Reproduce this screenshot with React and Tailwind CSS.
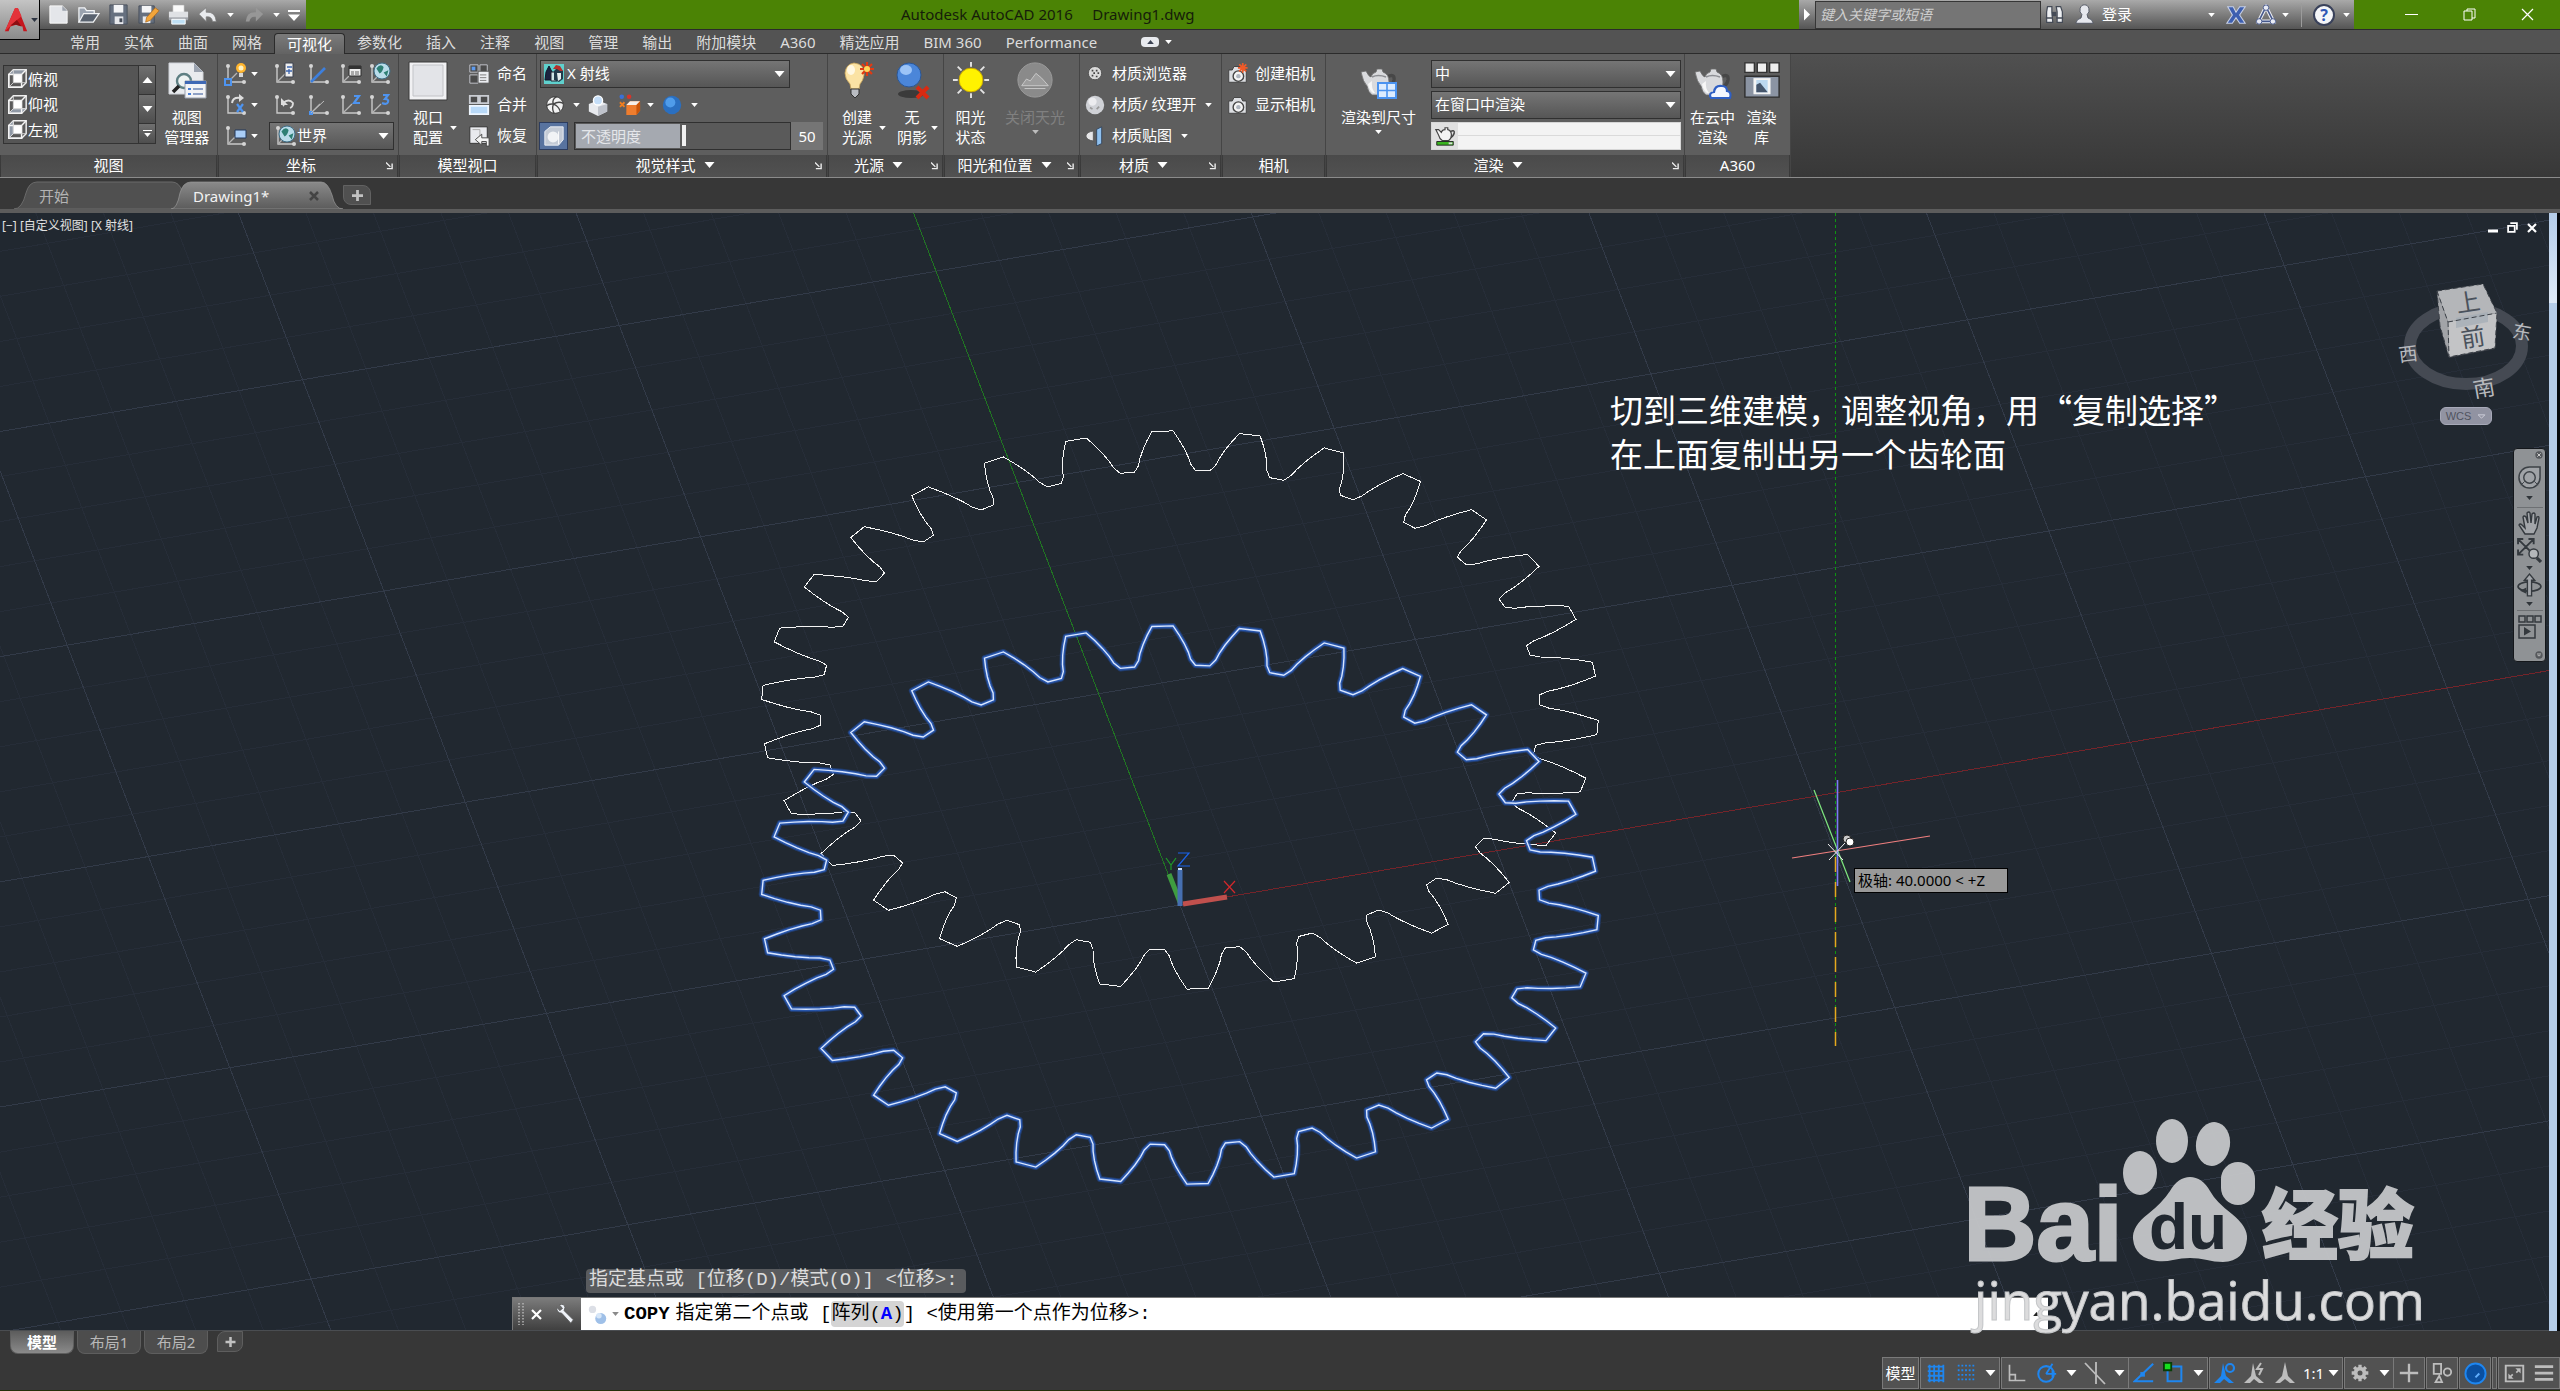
import React from "react";

/* ---------- small shared pieces ---------- */

function Tri({ up = false, size = "sm", color = "#fff" }) {
  return (
    <svg viewBox="0 0 10 6" className={(size === "lg" ? "w-[11px] h-[6px]" : "w-[7px] h-[4px]") + " shrink-0"}>
      <path d={up ? "M0 6h10L5 0z" : "M0 0h10L5 6z"} fill={color} />
    </svg>
  );
}

function Ic({ w = 24, vb, children }) {
  return (
    <svg width={w} height={w} viewBox={vb || "0 0 24 24"} fill="none" className="shrink-0">
      {children}
    </svg>
  );
}

function Ucs({ children, diag = true, w = 24 }) {
  return (
    <Ic w={w}>
      <path d="M5 4v16h16" stroke="#c9c9c9" strokeWidth="1.4" />
      {diag && <path d="M5 20L14 11" stroke="#b5b5b5" strokeWidth="1.2" />}
      <circle cx="5" cy="4" r="2" fill="#d5d5d5" />
      <circle cx="21" cy="20" r="2" fill="#d5d5d5" />
      {children}
    </Ic>
  );
}

function Globe({ cx, cy, r }) {
  return (
    <g>
      <circle cx={cx} cy={cy} r={r} fill="#b9dcea" stroke="#3e6d86" />
      <path
        d={`M${cx - r * 0.7} ${cy - r * 0.3}q${r * 0.5} ${-r * 0.7} ${r * 0.9} ${-r * 0.2}q${-r * 0.1} ${r * 0.6} ${-r * 0.5} ${r * 0.8}zM${cx + r * 0.2} ${cy + r * 0.2}l${r * 0.6} ${-r * 0.3}l${-r * 0.2} ${r * 0.8}z`}
        fill="#2d7f74"
      />
    </g>
  );
}

function CubeIcon({ face }) {
  const faces = { top: "M3 7l5-5h14l-5 5z", bottom: "M3 21l5-5h14l-5 5z", left: "M3 7l5-5v14l-5 5z" };
  return (
    <Ic w={22}>
      <path d="M3 7l5-5h14v14l-5 5H3z" fill="#5a5a5a" stroke="#f0f0f0" strokeWidth="1.6" />
      <path d="M8 7h9v9H8z" fill="#fff" />
      <path d={faces[face]} fill="#8f98a5" stroke="#f0f0f0" strokeWidth="1" />
      <path d="M3 7h14v14H3zM17 7l5-5" stroke="#f4f4f4" strokeWidth="1.6" />
      <path d="M8 2v14h14M8 16l-5 5" stroke="#d4d4d4" strokeWidth="1" />
    </Ic>
  );
}

function Teapot({ x = 0, y = 0, s = 1 }) {
  return (
    <g transform={`translate(${x} ${y}) scale(${s})`}>
      <path d="M28 12q8-4 7 3q-1 6-9 9" stroke="#474747" strokeWidth="3.4" />
      <path d="M2 7l5-1q3 6 5 6q1-4 5-5l1-3h5l1 3q6 2 6 10q0 9-5 13H13q-4-3-5-9Q4 17 2 7z" fill="#d9dadd" stroke="#6b6b6b" strokeWidth="0.8" />
      <path d="M13 12q6-3 14 0" stroke="#8d8f94" strokeWidth="1.4" />
      <path d="M13 16q-1 7 3 12h-2q-4-3-5-9z" fill="#f7f7f7" />
    </g>
  );
}

/* ---------- title bar ---------- */

function QuickAccess() {
  return (
    <div className="w-[306px] h-[29px] shrink-0 pl-[47px] flex items-center gap-[7px] bg-linear-to-b from-[#a9a9a9] to-[#555555]">
      <button aria-label="新建">
        <Ic w={23}><path d="M3 3h13l5 5v13H3z" fill="#e4e6ea" stroke="#fafafa" /><path d="M16 3v5h5z" fill="#9da3ad" /></Ic>
      </button>
      <button aria-label="打开">
        <Ic w={23}><path d="M2 20V5h6l2 3h8v4" fill="#9aa3b0" stroke="#f2f4f6" strokeWidth="1.3" /><path d="M2 20l5-9h16l-6 9z" fill="#59626f" stroke="#f2f4f6" strokeWidth="1.3" /></Ic>
      </button>
      <button aria-label="保存">
        <Ic w={23}><path d="M3 2h18v20H3z" fill="#66707f" stroke="#4a525e" /><path d="M7 2h10v8H7z" fill="#f3f4f6" /><path d="M8 14h9v8H8z" fill="#e6e8ec" /><path d="M13 16h3v4h-3z" fill="#444b57" /></Ic>
      </button>
      <button aria-label="另存为">
        <Ic w={23}><path d="M2 3h16v18H2z" fill="#66707f" stroke="#4a525e" /><path d="M5 3h10v7H5z" fill="#f3f4f6" /><path d="M6 14h8v7H6z" fill="#e6e8ec" /><path d="M10 15l9-10 4 3-9 10-5 2z" fill="#f2a53a" stroke="#a8651a" strokeWidth="0.7" /></Ic>
      </button>
      <button aria-label="打印">
        <Ic w={23}><path d="M6 2h12v8H6z" fill="#fafafa" stroke="#999" strokeWidth="0.6" /><path d="M2 9h20v8H2z" fill="#dfe1e4" /><path d="M2 15h20v3H2z" fill="#9fa3a9" /><path d="M5 17h14v5H5z" fill="#bfe0f5" stroke="#fff" /></Ic>
      </button>
      <button aria-label="放弃" className="flex items-center gap-[8px]">
        <Ic w={22}><path d="M10 4v5q10-1 11 10h-4q-1-6-7-5v5L2 11z" fill="#e9ebee" stroke="#777" strokeWidth="0.7" /></Ic>
        <Tri />
      </button>
      <button aria-label="重做" className="flex items-center gap-[8px] pl-[2px]">
        <Ic w={22}><path d="M14 4v5Q4 8 3 19h4q1-6 7-5v5l8-8z" fill="#979797" /></Ic>
        <Tri />
      </button>
      <button aria-label="自定义快速访问工具栏">
        <Ic w={14} vb="0 0 14 14"><path d="M1 2h12v2H1zM1 6.500h12L7 13z" fill="#fff" /></Ic>
      </button>
    </div>
  );
}

function InfoCenter() {
  return (
    <div className="w-[555px] h-[29px] shrink-0 flex items-center bg-linear-to-b from-[#a9a9a9] to-[#555555]">
      <button aria-label="展开" className="w-4 flex justify-center">
        <svg viewBox="0 0 6 12" className="w-[6px] h-[13px]"><path d="M0 0l6 6-6 6z" fill="#fff" /></svg>
      </button>
      <input
        aria-label="搜索"
        placeholder="键入关键字或短语"
        className="w-[226px] h-[28px] px-1 text-[14px] italic bg-[#757575] border border-[#363636] placeholder-[#cfcfcf] text-white outline-none"
      />
      <div className="flex items-center flex-1 pl-[3px]">
        <button aria-label="搜索按钮">
          <Ic w={21}><path d="M4 3h5v6l1 12H3L3 9zM14 3h5l2 6v12h-6V9z" fill="#eef0f3" stroke="#454b57" strokeWidth="1.4" /><path d="M9 9h5v5H9z" fill="#454b57" /><path d="M2 16h8M14 16h8" stroke="#454b57" strokeWidth="1.500" /></Ic>
        </button>
        <button className="flex items-center gap-[7px] pl-[9px] text-white text-[15px]">
          <Ic w={21}><path d="M12 1a5 6 0 0 1 3 11l1 4q5 1 6 6H2q1-5 6-6l1-4A5 6 0 0 1 12 1z" fill="#e6e8ee" stroke="#4a505d" /></Ic>
          <span>登录</span>
        </button>
        <button aria-label="登录选项" className="ml-[76px]"><Tri /></button>
        <button aria-label="Exchange" className="ml-[10px]">
          <Ic w={22}><path d="M3 3h6l3 6 4-6h6l-6 9 6 9h-6l-4-6-4 6H2l6-9z" fill="#3d5fb0" stroke="#c7d0e6" strokeWidth="1.2" /></Ic>
        </button>
        <button aria-label="Autodesk 360" className="ml-[8px] flex items-center gap-[5px]">
          <Ic w={22}><path d="M12 3l8 16H4z" stroke="#eef0f6" strokeWidth="4" /><path d="M12 3l8 16H4z" stroke="#46588c" strokeWidth="1.8" /><circle cx="12" cy="4" r="3" fill="#e9ecf5" stroke="#46588c" /><circle cx="4.500" cy="19" r="3" fill="#e9ecf5" stroke="#46588c" /><circle cx="19.500" cy="19" r="3" fill="#e9ecf5" stroke="#46588c" /></Ic>
          <Tri />
        </button>
        <span className="w-px h-6 bg-[#9b9b9b] ml-[12px]" />
        <button aria-label="帮助" className="ml-[11px] flex items-center gap-[8px]">
          <span className="w-[22px] h-[22px] rounded-full bg-[#f4f5f8] border-2 border-[#39415a] text-[#2e57b5] font-bold text-[16px] leading-[18px] text-center">?</span>
          <Tri />
        </button>
      </div>
    </div>
  );
}

function TitleBar() {
  return (
    <header className="relative flex h-[30px] bg-[#4b8305] border-b border-[#2b2b2b] text-[15px]">
      <QuickAccess />
      <h1 className="flex-1 pl-[595px] leading-[29px] text-[#161d0a] whitespace-pre font-normal">{"Autodesk AutoCAD 2016     Drawing1.dwg"}</h1>
      <InfoCenter />
      <div className="w-[206px] shrink-0 flex items-center justify-between pl-[51px] pr-[26px]">
        <button aria-label="最小化"><Ic w={13} vb="0 0 13 13"><path d="M0 6.500h13" stroke="#fff" /></Ic></button>
        <button aria-label="还原"><Ic w={13} vb="0 0 13 13"><path d="M1 3h8v9H1zM4 3V1h8v9H9" stroke="#fff" /></Ic></button>
        <button aria-label="关闭"><Ic w={13} vb="0 0 13 13"><path d="M1 1l11 11M12 1L1 12" stroke="#fff" strokeWidth="1.2" /></Ic></button>
      </div>
      <button aria-label="应用程序菜单" className="absolute left-0 top-0 z-10 w-10 h-10 flex items-center gap-[2px] pl-[3px] border-r border-b border-black bg-linear-to-b from-[#c4c4c4] to-[#8a8a8a]">
        <Ic w={26} vb="0 0 26 28">
          <path d="M12 1L1 26h4l2-5 6-2 7 2 1 5h4L15 1z" fill="#c5161d" />
          <path d="M12 1L1 26l13-12 5-4L15 1z" fill="#e3333a" />
          <path d="M7 20l7-6 5 7-6-2z" fill="#8b0d12" />
        </Ic>
        <Tri color="#2d3442" />
      </button>
    </header>
  );
}

/* ---------- ribbon ---------- */

const tabs = ["常用", "实体", "曲面", "网格", "可视化", "参数化", "插入", "注释", "视图", "管理", "输出", "附加模块", "A360", "精选应用", "BIM 360", "Performance"];

function RibbonTabs() {
  return (
    <nav className="flex items-end h-6 pl-[58px] bg-[#535353] border-b border-[#2b2b2b] text-[15px] text-[#dcdcdc]">
      {tabs.map((t) => (
        <button
          key={t}
          className={
            t === "可视化"
              ? "h-[21px] px-3 leading-[17px] text-white bg-linear-to-b from-[#7b7b7b] to-[#636363] border border-b-0 border-[#2b2b2b] rounded-t-sm -mb-px"
              : "h-[21px] px-3 leading-[17px]"
          }
        >
          {t}
        </button>
      ))}
      <button aria-label="最小化功能区" className="flex items-center gap-[6px] h-[22px] ml-8">
        <span className="flex items-center justify-center w-[18px] h-[10px] rounded-sm bg-[#e8eaee]"><Tri up color="#3b4252" /></span>
        <Tri />
      </button>
    </nav>
  );
}

function Panel({ title, width, more, launcher, children }) {
  return (
    <section className={"shrink-0 flex flex-col border-r border-[#454545] " + width}>
      <div className="flex-1 flex bg-[#5e5e5e]">{children}</div>
      <div className={"relative h-[22px] mx-px flex items-center justify-center gap-[8px] text-white text-[15px] leading-[18px] pb-[2px] bg-linear-to-b from-[#4a4a4a] to-[#515151] " + (launcher ? "pr-[14px]" : "")}>
        <span>{title}</span>
        {more && <Tri size="lg" />}
        {launcher && (
          <button aria-label={title + "设置"} className="absolute right-[4px] top-[7px]">
            <svg viewBox="0 0 8 8" className="w-[7px] h-[8px]"><path d="M0 0l5 5M7 1v6H1" stroke="#eee" strokeWidth="1.600" fill="none" /></svg>
          </button>
        )}
      </div>
    </section>
  );
}

function Big({ icon, lines, arrow, below, dim, width }) {
  return (
    <button className={"relative flex flex-col items-center pt-[7px] text-[15px] leading-[20px] whitespace-nowrap " + (dim ? "text-[#808080] " : "text-white ") + width}>
      <span className="h-[46px] flex items-start justify-center">{icon}</span>
      {lines.map((l) => <span key={l}>{l}</span>)}
      {arrow && <span className="absolute right-0 top-[72px] flex"><Tri /></span>}
      {below && <span className="pt-[3px]"><Tri color={dim ? "#bdbdbd" : "#fff"} /></span>}
    </button>
  );
}

function Small({ icon, children, arrow }) {
  return (
    <button className="flex items-center gap-[7px] h-[31px] text-white text-[15px] whitespace-nowrap">
      {icon}
      <span>{children}</span>
      {arrow && <span className="pl-[2px]"><Tri /></span>}
    </button>
  );
}

function Combo({ label, options, icon, width, pad = "pl-[3px]" }) {
  return (
    <div className={"relative flex items-center h-[28px] border border-[#303030] bg-linear-to-b from-[#757575] to-[#565656] " + width}>
      {icon && <span className="absolute left-[3px] flex">{icon}</span>}
      <select aria-label={label} className={"appearance-none w-full h-full bg-transparent text-white text-[15px] outline-none " + pad}>
        {options.map((o) => <option key={o}>{o}</option>)}
      </select>
      <span className="absolute right-[4px] flex pointer-events-none"><Tri size="lg" /></span>
    </div>
  );
}

function ViewPanel() {
  return (
    <Panel title="视图" width="w-[218px]">
      <div className="flex mt-[11px] ml-[3px] w-[154px] h-[79px] border border-[#333] bg-[#555555]">
        <ul className="flex-1 flex flex-col text-white text-[15px]">
          {[["俯视", "top"], ["仰视", "bottom"], ["左视", "left"]].map(([t, f]) => (
            <li key={t} className="flex-1 flex items-center">
              <button className="flex items-center pl-[2px]"><CubeIcon face={f} />{t}</button>
            </li>
          ))}
        </ul>
        <div className="w-[17px] flex flex-col border-l border-[#333]">
          <button aria-label="上" className="h-[29px] flex items-center justify-center bg-linear-to-b from-[#707070] to-[#4e4e4e] border-b border-[#333]"><Tri up size="lg" /></button>
          <button aria-label="下" className="h-[29px] flex items-center justify-center bg-linear-to-b from-[#707070] to-[#4e4e4e] border-b border-[#333]"><Tri size="lg" /></button>
          <button aria-label="展开列表" className="flex-1 flex flex-col gap-[2px] items-center justify-center bg-linear-to-b from-[#707070] to-[#4e4e4e]"><span className="w-[9px] h-px bg-white" /><Tri /></button>
        </div>
      </div>
      <Big
        width="w-[61px]"
        lines={["视图", "管理器"]}
        icon={
          <Ic w={40} vb="0 0 40 40">
            <path d="M2 2h25l9 9v22H2z" fill="#e9ebee" stroke="#cfd2d8" /><path d="M27 2v9h9z" fill="#9ba3b0" />
            <circle cx="17" cy="20" r="7" stroke="#5e7f83" strokeWidth="2.4" fill="#eef3f3" /><path d="M12 25l-6 6" stroke="#222" strokeWidth="3.500" />
            <path d="M18 20h21v17H18z" fill="#f2f3f6" stroke="#9aa1ae" /><path d="M18 20h21v3H18z" fill="#3e68b5" />
            <path d="M21 27h3v2h-3zM21 32h3v2h-3z" fill="#4a7fd4" /><path d="M26 28h10M26 33h10" stroke="#6f87b5" strokeWidth="1.500" />
          </Ic>
        }
      />
    </Panel>
  );
}

function CoordPanel() {
  const row = "flex items-center h-[31px] pl-[5px]";
  return (
    <Panel title="坐标" width="w-[181px]" launcher>
      <div className="flex flex-col pt-[4px] w-full">
        <div className={row}>
          <button aria-label="UCS 图标" className="flex items-center gap-[4px] w-[49px]"><Ucs><path d="M2 17h6v6H2z" fill="#5e5e5e" stroke="#4e94f0" strokeWidth="2" /><circle cx="18" cy="6" r="5" fill="#ffb52e" /><circle cx="18" cy="6" r="2.500" fill="#fff3c4" /><path d="M16 11h4v4h-4z" fill="#d8d8d8" /></Ucs><Tri /></button>
          <button aria-label="命名 UCS" className="w-[34px]"><Ucs><path d="M13 1h8v14h-8z" fill="#eee" stroke="#3d4350" /><path d="M15 5h5M14 9h6M17 7v5" stroke="#3c65b0" strokeWidth="1.300" /></Ucs></button>
          <button aria-label="UCS" className="w-[32px]"><Ucs diag={false}><path d="M5 20L19 6" stroke="#3d7fdd" strokeWidth="2.600" /></Ucs></button>
          <button aria-label="UCS 列表" className="w-[29px]"><Ucs><path d="M11 4h12v10H11z" fill="#eee" stroke="#2d2d2d" /><path d="M11 4h12v3H11z" fill="#333" /><path d="M13 10h3M17 10h4M13 12h3M17 12h4" stroke="#666" /></Ucs></button>
          <button aria-label="世界 UCS"><Ucs><Globe cx={15} cy={9} r={8} /></Ucs></button>
        </div>
        <div className={row}>
          <button aria-label="绕 X 旋转" className="flex items-center gap-[4px] w-[49px]"><Ucs diag={false}><path d="M9 10q1-6 8-5" stroke="#ddd" strokeWidth="2" /><path d="M16 1l5 4-5 4z" fill="#ddd" /><path d="M14 11l6 8M20 11l-6 8" stroke="#4e94f0" strokeWidth="2.200" /></Ucs><Tri /></button>
          <button aria-label="上一个 UCS" className="w-[34px]"><Ucs diag={false}><path d="M12 13q-1-1-1-3 6-5 10 0 0 4-3 5" stroke="#ddd" strokeWidth="1.800" /><path d="M9 5v7h7z" fill="#ddd" /></Ucs></button>
          <button aria-label="原点" className="w-[32px]"><Ucs><path d="M3 18h4v4H3z" fill="#4e94f0" /><path d="M5 20L18 8" stroke="#bbb" /></Ucs></button>
          <button aria-label="Z 轴矢量" className="w-[29px]"><Ucs><path d="M16 3h5l-5 7h6" stroke="#4e94f0" strokeWidth="2.200" /></Ucs></button>
          <button aria-label="三点"><Ucs><path d="M16 2h5l-3 4q4 0 3 3-1 3-6 1" stroke="#4e94f0" strokeWidth="2.200" /></Ucs></button>
        </div>
        <div className={row}>
          <button aria-label="视图 UCS" className="flex items-center gap-[4px] w-[46px]"><Ucs><path d="M12 6h11v8H12z" fill="#a9cdf7" stroke="#23395d" /></Ucs><Tri /></button>
          <Combo label="坐标系" options={["世界"]} width="w-[125px]" pad="pl-[27px]" icon={<Ucs><Globe cx={14} cy={10} r={8} /></Ucs>} />
        </div>
      </div>
    </Panel>
  );
}

function ViewportPanel() {
  return (
    <Panel title="模型视口" width="w-[138px]">
      <Big
        width="w-[58px]"
        arrow
        lines={["视口", "配置"]}
        icon={<svg viewBox="0 0 40 40" className="w-[40px] h-[40px]"><path d="M1 1h38v38H1z" fill="#f1f1f3" stroke="#3a3a3a" /><path d="M5 4h30v31H5z" fill="#e3e4e8" stroke="#c2c3c7" /></svg>}
      />
      <div className="flex flex-col pt-[4px] pl-[11px]">
        <Small icon={<Ic w={22}><path d="M2 2h9v8H2zM13 2h8v8h-8zM2 13h9v9H2z" fill="#4b4b4b" stroke="#c9ccd2" /><path d="M4 4h4v4H4z" fill="#5d9bf0" /><path d="M11 9h12v13H11z" fill="#eceef2" stroke="#555" /><path d="M13 13h7M13 16h7M13 19h7" stroke="#777" /></Ic>}>命名</Small>
        <Small icon={<Ic w={22}><path d="M2 2h9v8H2zM13 2h9v8h-9z" fill="#4b4b4b" stroke="#c9ccd2" strokeWidth="2" /><path d="M2 13h20v9H2z" fill="#b8d9f8" stroke="#eef6ff" strokeWidth="2" /></Ic>}>合并</Small>
        <Small icon={<Ic w={22}><path d="M2 2h19v18H2z" fill="#e9eaee" stroke="#2f2f2f" /><path d="M5 5h8v9" stroke="#aaa" /><path d="M8 16l7-6v4h8v9h-3v-5h-5v4z" fill="#f4f4f4" stroke="#444" /></Ic>}>恢复</Small>
      </div>
    </Panel>
  );
}

function StylePanel() {
  return (
    <Panel title="视觉样式" width="w-[291px]" more launcher>
      <div className="flex flex-col pt-[4px] w-full">
        <div className="flex items-center h-[31px] pl-[3px]">
          <Combo
            label="视觉样式"
            options={["X 射线"]}
            width="w-[250px]"
            pad="pl-[26px]"
            icon={<Ic w={20} vb="0 0 20 20"><path d="M0 0h20v20H0z" fill="#5fd0cd" /><path d="M5 2l3 6-1 8H1l1-8z" fill="#1b2440" stroke="#101828" /><path d="M7 8h6v9H7z" fill="#cfe6e6" stroke="#223" /><path d="M10 16V7l4-4 5 4v8l-4 3z" fill="#223a4a" /><path d="M13 9h4v6l-3 2z" fill="#e4eded" /><path d="M9 5l3-4 4 1 3 5-3 0-3-2z" fill="#b5302b" /></Ic>}
          />
        </div>
        <div className="flex items-center h-[31px] pl-[8px]">
          <button aria-label="面样式" className="flex items-center gap-[8px] w-[42px]"><Ic w={20}><circle cx="12" cy="12" r="10" fill="#f1f1f1" stroke="#333" /><path d="M14 2q-6 3-4 9M10 11q6-4 12-1M10 11q-5-1-8 2M10 11q-2 6 1 11M10 11q6 2 8 8" stroke="#444" strokeWidth="1.600" /></Ic><Tri /></button>
          <button aria-label="X 射线效果" className="w-[32px]"><Ic w={22}><path d="M2 11l10-4 10 4v8l-10 5-10-5z" fill="#e8eaee" /><path d="M12 14v10l10-5v-8z" fill="#bfc3cb" /><circle cx="12" cy="7" r="5" fill="#c5def8" stroke="#fff" strokeWidth="1.500" /></Ic></button>
          <button aria-label="材质和纹理" className="flex items-center gap-[6px] w-[43px]"><Ic w={22}><circle cx="3" cy="3" r="2.500" fill="#3a70d6" /><circle cx="11" cy="3" r="2.500" fill="#d7342a" /><path d="M1 9l5 5M6 9l-5 5" stroke="#f07e1e" strokeWidth="2" /><path d="M8 12l4-4h11v10l-4 5H8z" fill="#ee7d2e" /><path d="M8 12l4-4h11l-4 4z" fill="#f5f0ea" /><path d="M19 12l4-4v10l-4 5z" fill="#c9550a" /></Ic><Tri /></button>
          <button aria-label="光线" className="flex items-center gap-[9px]"><Ic w={20}><circle cx="12" cy="12" r="11" fill="#2a6fc0" /><circle cx="10" cy="9" r="6" fill="#4f9cea" /></Ic><Tri /></button>
        </div>
        <div className="flex items-center h-[31px] pl-[2px]">
          <button aria-label="X 射线开关" className="w-[29px] h-[28px] flex items-center justify-center border border-[#2c3c5e] bg-[#58739f]"><Ic w={22}><path d="M2 7l6-5h14v14l-5 6H2z" fill="#c4cbd6" stroke="#f0f3f8" /><circle cx="11" cy="13" r="6" fill="#f1f3f6" /><path d="M17 7v14" stroke="#fff" /></Ic></button>
          <label className="relative ml-[6px] w-[217px] h-[28px] border border-[#303030] bg-[#5a5a5a] p-px flex text-[15px] leading-[24px] text-[#e4e6ea]">
            <span className="w-[104px] h-full bg-[#a5a9b0] pl-[5px]">不透明度</span>
            <span className="ml-[2px] w-[4px] h-[21px] mt-px bg-[#f0f0f0]" />
            <input type="range" defaultValue="50" className="absolute inset-0 w-full h-full opacity-0" />
          </label>
          <output className="w-[32px] h-[28px] bg-[#757575] text-white text-[15px] leading-[28px] text-center">50</output>
        </div>
      </div>
    </Panel>
  );
}

function LightPanel() {
  return (
    <Panel title="光源" width="w-[116px]" more launcher>
      <Big
        width="w-[58px]"
        arrow
        lines={["创建", "光源"]}
        icon={
          <Ic w={40} vb="0 0 40 40">
            <path d="M17 2q11 1 10 12-1 6-4 9l-1 5h-8l-1-5q-5-5-5-11Q9 3 17 2z" fill="#fbe3a4" stroke="#caa65a" strokeWidth="0.800" />
            <ellipse cx="14" cy="9" rx="4" ry="5" fill="#fff8e2" />
            <path d="M14 28h8v5l-4 4-4-4z" fill="#b9bcc2" stroke="#333" />
            <path d="M30 1v14M23 8h14M25 3l10 10M35 3L25 13" stroke="#e23a12" strokeWidth="2.200" /><circle cx="30" cy="8" r="3" fill="#ffd85c" />
          </Ic>
        }
      />
      <Big
        width="w-[52px]"
        arrow
        lines={["无", "阴影"]}
        icon={
          <Ic w={40} vb="0 0 40 40">
            <ellipse cx="19" cy="33" rx="13" ry="4" fill="#3a3a3a" />
            <ellipse cx="17" cy="14" rx="12" ry="12" fill="#4b86d9" stroke="#2c5795" /><ellipse cx="14" cy="9" rx="6" ry="5" fill="#9cc4f7" />
            <path d="M25 26l11 11M36 26L25 37" stroke="#d92a12" strokeWidth="4" />
          </Ic>
        }
      />
    </Panel>
  );
}

function SunPanel() {
  return (
    <Panel title="阳光和位置" width="w-[136px]" more launcher>
      <Big
        width="w-[53px]"
        lines={["阳光", "状态"]}
        icon={
          <Ic w={38} vb="0 0 40 40">
            <path d="M20 1v38M1 20h38M6 6l28 28M34 6L6 34" stroke="#e4e4e4" strokeWidth="2" />
            <circle cx="20" cy="20" r="14" fill="#5e5e5e" /><circle cx="20" cy="20" r="12.500" fill="#fff200" stroke="#caa800" />
          </Ic>
        }
      />
      <Big
        width="w-[76px]"
        dim
        below
        lines={["关闭天光"]}
        icon={
          <Ic w={38} vb="0 0 40 40">
            <circle cx="20" cy="20" r="18" fill="#8a8a8a" stroke="#9c9c9c" />
            <path d="M6 26l5-7 4 2 6-8 6 5 7 8z" fill="#9e9e9e" stroke="#c9c9c9" /><path d="M9 29h22" stroke="#c9c9c9" />
          </Ic>
        }
      />
    </Panel>
  );
}

function MaterialPanel() {
  return (
    <Panel title="材质" width="w-[142px]" more launcher>
      <div className="flex flex-col pt-[4px] pl-[5px]">
        <Small icon={<Ic w={20}><circle cx="12" cy="11" r="8" fill="#dadada" stroke="#444" /><path d="M8 7h2v2H8zM13 7h2v2h-2zM10 10h2v2h-2zM15 10h2v2h-2zM8 13h2v2H8zM13 14h2v2h-2z" fill="#444" /></Ic>}>材质浏览器</Small>
        <Small arrow icon={<Ic w={20}><circle cx="12" cy="12" r="11" fill="#cfd1d6" /><circle cx="9" cy="8" r="5" fill="#ececef" /><path d="M14 17l3-3M6 15l3 2" stroke="#999" strokeWidth="2" /></Ic>}>材质/ 纹理开</Small>
        <Small arrow icon={<Ic w={20}><path d="M10 6v12q-8-1-9-6 1-5 9-6z" fill="#e6e6e8" stroke="#555" /><path d="M14 4l6-3v20l-6 3z" fill="#8fc0ee" stroke="#2c3f57" /></Ic>}>材质贴图</Small>
      </div>
    </Panel>
  );
}

function Camera({ star }) {
  return (
    <Ic w={21}>
      <path d="M2 8h4l2-4h8l2 4h4v14H2z" fill="#dddfe3" stroke="#3b3b3b" />
      <circle cx="13" cy="15" r="6" fill="#f5f5f5" stroke="#444" strokeWidth="1.600" /><circle cx="13" cy="15" r="2.500" fill="#aeb4be" />
      {star && <path d="M18 0v11M12.500 5.500h11M14 1.500l8 8M22 1.500l-8 8" stroke="#f05a28" strokeWidth="2" />}
    </Ic>
  );
}

function CameraPanel() {
  return (
    <Panel title="相机" width="w-[104px]">
      <div className="flex flex-col pt-[4px] pl-[5px]">
        <Small icon={<Camera star />}>创建相机</Small>
        <Small icon={<Camera />}>显示相机</Small>
      </div>
    </Panel>
  );
}

function RenderPanel() {
  return (
    <Panel title="渲染" width="w-[359px]" more launcher>
      <Big
        width="w-[105px]"
        below
        lines={["渲染到尺寸"]}
        icon={
          <Ic w={40} vb="0 0 40 40">
            <Teapot y={4} />
            <path d="M19 22h18v15H19z" fill="#dcecff" stroke="#4b93f0" strokeWidth="2" /><path d="M28 22v15M19 29.500h18" stroke="#4b93f0" strokeWidth="1.600" />
          </Ic>
        }
      />
      <div className="flex flex-col pt-[4px]">
        <div className="h-[31px] flex items-center"><Combo label="渲染预设" options={["中"]} width="w-[250px]" /></div>
        <div className="h-[31px] flex items-center"><Combo label="渲染目标" options={["在窗口中渲染"]} width="w-[250px]" /></div>
        <div className="h-[31px] flex items-center">
          <div className="w-[250px] h-[28px] flex bg-[#f3f3f3] border border-[#d6d6d6]">
            <span className="w-[26px] bg-[#e0e0e0] flex items-center justify-center">
              <Ic w={22}>
                <path d="M18 7q5-2 4 2-1 4-5 5" stroke="#444" strokeWidth="1.600" />
                <path d="M2 5h3l3 3q1-3 4-3V3h3v2q4 1 4 6 0 4-3 6H9q-3-2-4-6z" fill="#f4f4f4" stroke="#444" strokeWidth="1.300" />
                <path d="M3 18h18v4H3z" fill="#39b31e" stroke="#222" /><path d="M16 19h4v2h-4z" fill="#ddd" />
              </Ic>
            </span>
            <span className="flex-1 flex items-center"><span className="h-px w-full bg-[#dadada]" /></span>
          </div>
        </div>
      </div>
    </Panel>
  );
}

function A360Panel() {
  return (
    <Panel title="A360" width="w-[106px]">
      <Big
        width="w-[55px]"
        lines={["在云中", "渲染"]}
        icon={
          <Ic w={40} vb="0 0 40 40">
            <Teapot y={4} />
            <path d="M18 37q-3-5 3-6 1-7 8-6 5 0 5 5 5 1 3 7z" fill="#f4f7ff" stroke="#2f5fc4" strokeWidth="2.200" />
          </Ic>
        }
      />
      <Big
        width="w-[43px]"
        lines={["渲染", "库"]}
        icon={
          <Ic w={38} vb="0 0 40 40">
            <path d="M2 2h10v10H2zM15 2h10v10H15zM28 2h10v10H28z" fill="#eee" stroke="#333" strokeWidth="1.500" />
            <path d="M2 16h36v22H2z" fill="#8b94a3" stroke="#2f2f2f" strokeWidth="1.500" /><path d="M11 18h18v17H11z" fill="#f4f4f4" />
            <path d="M14 20h12v13H14z" fill="#bcd8ef" /><path d="M14 33V25l4-2 8 10z" fill="#45556b" />
          </Ic>
        }
      />
    </Panel>
  );
}

function Ribbon() {
  return (
    <div className="flex h-[124px] overflow-hidden border-b border-[#8b8b8b] bg-linear-to-b from-[#505050] to-[#383838]">
      <ViewPanel />
      <CoordPanel />
      <ViewportPanel />
      <StylePanel />
      <LightPanel />
      <SunPanel />
      <MaterialPanel />
      <CameraPanel />
      <RenderPanel />
      <A360Panel />
    </div>
  );
}

/* ---------- document tabs ---------- */

function DocTabs() {
  return (
    <div className="flex items-end h-[35px] pl-[14px] border-b-4 border-[#5c5c5c] bg-[#373737] text-[15px]">
      <button className="relative w-[168px] h-[28px] text-left pl-[25px] pt-[2px] text-[#b4b4b4]">
        <svg viewBox="0 0 168 28" preserveAspectRatio="none" className="absolute inset-0 w-full h-full"><path d="M0 28Q8 28 12 12Q15 1 23 1H158Q165 1 168 10V28z" fill="#505050" stroke="#6a6a6a" /></svg>
        <span className="relative">开始</span>
      </button>
      <div className="relative w-[160px] h-[28px] flex items-center justify-between pl-[12px] pr-[22px] pt-[2px] -ml-[1px] text-[#f2f2f2]">
        <svg viewBox="0 0 172 28" preserveAspectRatio="none" className="absolute -left-[10px] top-0 w-[172px] h-full">
          <defs><linearGradient id="tabfill" x2="0" y2="1"><stop offset="0" stopColor="#8a8a8a" /><stop offset="1" stopColor="#5c5c5c" /></linearGradient></defs>
          <path d="M0 28Q6 28 9 12Q12 1 20 1H150Q157 1 161 14Q164 28 172 28z" fill="url(#tabfill)" stroke="#9a9a9a" strokeWidth="0.700" />
        </svg>
        <button className="relative">Drawing1*</button>
        <button aria-label="关闭图形" className="relative"><svg viewBox="0 0 10 10" className="w-[10px] h-[10px]"><path d="M1 1l8 8M9 1L1 9" stroke="#444" strokeWidth="2.500" /></svg></button>
      </div>
      <button aria-label="新图形" className="relative w-[28px] h-[20px] mb-1 ml-[2px] flex items-center justify-center rounded-bl-lg rounded-tr-lg border border-[#626262] bg-[#505050]">
        <svg viewBox="0 0 10 10" className="w-[11px] h-[11px]"><path d="M5 0v10M0 5h10" stroke="#c2c2c2" strokeWidth="2.500" /></svg>
      </button>
    </div>
  );
}

/* ---------- drawing: orthographic view of the XY plane ---------- */

const OX = 1180;
const OY = 692;
const UNIT = 6.54;
const TURN = (14.4 * Math.PI) / 180;
const SQUASH = 0.667;
const LIFT = 195;

function project(x, y) {
  const px = x * Math.cos(TURN) - y * Math.sin(TURN);
  const py = x * Math.sin(TURN) + y * Math.cos(TURN);
  return [OX + px * UNIT, OY - py * UNIT * SQUASH];
}

/* radius and half tooth angle (degrees) from root to tip */
const flank = [[55, 4.85], [56.4, 4.05], [58, 3.65], [60, 3], [62, 2.25], [64, 1.45]];

function gearPath() {
  const pts = [];
  for (let k = 0; k < 30; k++) {
    const mid = 6 + 12 * k;
    const side = [...flank.map(([r, a]) => [r, mid - a]), ...[...flank].reverse().map(([r, a]) => [r, mid + a])];
    side.forEach(([r, deg]) => {
      const t = (deg * Math.PI) / 180;
      pts.push(project(r * Math.cos(t), r * Math.sin(t)).map((v) => v.toFixed(1)).join(" "));
    });
  }
  return "M" + pts.join("L") + "Z";
}

function gridPaths() {
  let minor = "";
  let major = "";
  const far = 420;
  for (let k = -36; k <= 36; k++) {
    const v = k * 10;
    const [a, b] = [project(v, -far), project(v, far)];
    const [c, d] = [project(-far, v), project(far, v)];
    const seg = `M${a[0].toFixed(1)} ${a[1].toFixed(1)}L${b[0].toFixed(1)} ${b[1].toFixed(1)}M${c[0].toFixed(1)} ${c[1].toFixed(1)}L${d[0].toFixed(1)} ${d[1].toFixed(1)}`;
    if (k % 5 === 0) major += seg;
    else minor += seg;
  }
  return { minor, major };
}

function Drawing() {
  const gear = gearPath();
  const { minor, major } = gridPaths();
  const [xa, xb] = project(400, 0);
  const [ya, yb] = project(0, 300);
  return (
    <svg className="absolute inset-0 w-full h-full" fill="none" aria-label="齿轮图形">
      <g shapeRendering="crispEdges">
        <path d={minor} stroke="#262d38" />
        <path d={major} stroke="#323a48" />
        <path d={`M${OX} ${OY}L${xa} ${xb}`} stroke="#74242a" />
        <path d={`M${OX} ${OY}L${ya} ${yb}`} stroke="#207522" />
        <path d={gear} stroke="#f4f4f4" transform={`translate(0 ${-LIFT})`} />
      </g>
      <path d={gear} stroke="#234d9c" strokeWidth="6" strokeLinejoin="round" opacity="0.55" />
      <path d={gear} stroke="#2b5cbd" strokeWidth="4" strokeLinejoin="round" opacity="0.8" />
      <path d={gear} stroke="#d8e6ff" strokeWidth="1.400" />
      {/* UCS icon */}
      <path d="M1180 689L1169 661" stroke="#3f9c3f" strokeWidth="5" />
      <path d="M1183 691L1227 684" stroke="#c0504d" strokeWidth="5" />
      <path d="M1180 693V657" stroke="#466fb0" strokeWidth="5" />
      <path d="M1178 656h4" stroke="#cfe3ff" strokeWidth="2" />
      <g strokeWidth="1.200">
        <path d="M1166 645l5 7 5-7M1171 652v5" stroke="#1f9a28" />
        <path d="M1178 640h11l-11 13h12" stroke="#1a62e8" />
        <path d="M1224 668l11 12M1235 668l-11 12" stroke="#d2282b" />
      </g>
      {/* tracking line and cursor */}
      <path d="M1835.500 0V833" stroke="#0d960f" strokeDasharray="3 3" />
      <path d="M1835.500 644V833" stroke="#e5a91d" strokeWidth="1.500" strokeDasharray="15 10" />
      <path d="M1792 645L1930 623" stroke="#f07f7f" strokeWidth="1.200" />
      <path d="M1814 577L1850 669" stroke="#7fe87f" strokeWidth="1.200" />
      <path d="M1837.500 567V673" stroke="#7c7cf5" strokeWidth="1.600" />
      <path d="M1828 631l15 16M1845 630l-16 17" stroke="#f2f2f2" />
      <circle cx="1847" cy="626" r="4" fill="#c9c9c9" stroke="#222" />
      <circle cx="1850" cy="629" r="4" fill="#fff" stroke="#222" />
    </svg>
  );
}

function ViewCube() {
  return (
    <div className="absolute right-[8px] top-[54px] w-[150px] flex flex-col items-center">
      <svg viewBox="0 0 150 140" className="w-[150px] h-[140px]" fill="none">
        <ellipse cx="75" cy="79" rx="56" ry="38" stroke="#454a53" strokeWidth="12" />
        <path d="M47 24l45-7 14 29-2 36-46 9-9-31z" fill="#3a3f47" />
        <path d="M46 24l46-7 14 29-49 9z" fill="#b4b6b9" />
        <path d="M57 55l49-9-2 35-46 9z" fill="#c3c4c6" />
        <path d="M46 24l11 31 1 35-9-31z" fill="#a2a4a8" />
        <path d="M65 51l32-6v10l-32 6z" fill="#a3acb5" opacity="0.700" />
        <path d="M46 24l46-7 14 29-2 35-46 9-9-31zM57 55l49-9M57 55l1 35M46 24l11 31" stroke="#3b4047" strokeDasharray="5 3" />
        <g fill="#4a525c" textAnchor="middle" className="text-[24px]">
          <text x="77" y="44" transform="rotate(-9 77 36)">上</text>
          <text x="82" y="79" transform="rotate(-9 82 70)">前</text>
        </g>
        <g fill="#b7b9bd" textAnchor="middle" className="text-[19px]">
          <text x="17" y="94" transform="rotate(-7 17 87)">西</text>
          <text x="131" y="72" transform="rotate(10 131 65)">东</text>
          <text x="93" y="129" className="text-[22px]" transform="rotate(-10 93 121)">南</text>
        </g>
      </svg>
      <button className="flex items-center gap-[6px] h-[18px] px-[5px] rounded-md bg-[#9193a2] border border-[#a7a9b8] text-[#50535f] text-[11px] leading-[16px] font-['Liberation_Sans',sans-serif]">
        WCS
        <svg viewBox="0 0 10 6" className="w-[9px] h-[5px]"><path d="M1 1h8L5 5z" fill="none" stroke="#d8d9e2" /></svg>
      </button>
    </div>
  );
}

function NavBar() {
  const sep = <span className="w-[26px] h-px bg-[#6d7073]" />;
  return (
    <div className="absolute right-[3px] top-[235px] w-[33px] h-[214px] flex flex-col items-center rounded-sm bg-[#8f9295] border border-[#14171b] text-[#2f3439]">
      <button aria-label="关闭导航栏" className="self-end m-[2px]"><Ic w={8}><circle cx="12" cy="12" r="11" fill="#55585c" /><path d="M7 7l10 10M17 7L7 17" stroke="#ccc" strokeWidth="3" /></Ic></button>
      <button aria-label="控制盘" className="mt-[5px]"><Ic w={23}><path d="M12 1h11v11a11 11 0 1 1-11-11z" stroke="#3c4146" strokeWidth="1.600" fill="#a0a3a7" /><circle cx="12" cy="12" r="6" stroke="#3c4146" strokeWidth="1.500" /><path d="M7 16l-4 4M17 16l4 4" stroke="#3c4146" /></Ic></button>
      <span className="py-[7px]"><Tri color="#2f3439" /></span>
      {sep}
      <button aria-label="平移" className="mt-[3px]"><Ic w={24}><path d="M7 23l-6-9q1-2 3 0l3 3L5 6q1-2 3 0l2 6-1-10q2-2 3 0l1 10 1-9q2-2 3 0v10l2-7q2-1 2 1l-2 10-3 6z" stroke="#34393e" strokeWidth="1.400" fill="#a3a6aa" /></Ic></button>
      <button aria-label="范围缩放" className="mt-[3px]"><Ic w={25}><path d="M1 1l15 15M16 1L1 16M1 6V1h5M11 1h5v5M1 11v5h5" stroke="#34393e" strokeWidth="1.800" /><circle cx="16" cy="15" r="4.500" fill="#b4b7ba" stroke="#34393e" strokeWidth="1.400" /><path d="M19 19l4 4" stroke="#34393e" strokeWidth="3" /></Ic></button>
      <span className="py-[3px]"><Tri color="#2f3439" /></span>
      <button aria-label="动态观察"><Ic w={25}><ellipse cx="12" cy="13" rx="11" ry="4.500" stroke="#34393e" strokeWidth="1.600" /><path d="M10 22V7H7l5-6 5 6h-3v15z" fill="#a3a6aa" stroke="#34393e" strokeWidth="1.300" /><path d="M3 17l6-3v6z" fill="#34393e" /></Ic></button>
      <span className="py-[4px]"><Tri color="#2f3439" /></span>
      {sep}
      <button aria-label="ShowMotion" className="mt-[4px]"><Ic w={24}><path d="M1 1h6v6H1zM9 1h6v6H9zM17 1h6v6h-6zM1 10h16v13H1z" stroke="#34393e" strokeWidth="1.500" /><path d="M6 12l7 4.500-7 4z" fill="#34393e" /></Ic></button>
      <button aria-label="导航栏选项" className="self-end mt-auto m-[2px]"><Ic w={8}><circle cx="12" cy="12" r="11" fill="#55585c" /><path d="M6 9h12M8 14h8" stroke="#ccc" strokeWidth="2.500" /></Ic></button>
    </div>
  );
}

function CommandLine() {
  return (
    <div className="absolute left-[512px] right-[501px] bottom-0 text-[19px] font-['Liberation_Mono','Noto_Sans_CJK_SC',monospace]">
      <div className="ml-[74px] mb-[4px] w-[380px] h-[24px] px-[3px] rounded-sm bg-[#595b5e] text-[#dcdcdc] whitespace-pre leading-[23px]">
        指定基点或 [位移(D)/模式(O)] &lt;位移&gt;:
      </div>
      <div className="flex h-[33px] border-t border-l border-[#777] bg-white">
        <div className="w-[68px] shrink-0 flex items-center gap-[7px] pl-[5px] bg-linear-to-b from-[#7c7c7c] to-[#404040]">
          <svg viewBox="0 0 6 22" className="w-[6px] h-[22px]"><path d="M1 0v22M5 0v22" stroke="#b5b5b5" strokeWidth="1.500" strokeDasharray="1.500 1.500" /></svg>
          <button aria-label="关闭命令行"><svg viewBox="0 0 11 11" className="w-[11px] h-[11px]"><path d="M1 1l9 9M10 1l-9 9" stroke="#fff" strokeWidth="2.200" /></svg></button>
          <button aria-label="自定义" className="pl-[6px]"><Ic w={20}><path d="M2 4l4 4 3-3-4-4q6-2 7 3l-1 4 11 11-3 4L8 11Q2 11 2 4z" fill="#eef2f8" stroke="#555" /></Ic></button>
        </div>
        <label className="flex-1 flex items-center text-black whitespace-pre">
          <span className="flex items-center gap-[3px] w-[43px] pl-[6px]">
            <Ic w={22}><circle cx="6" cy="7" r="4" fill="#dcdfe6" /><circle cx="15" cy="17" r="6" fill="#9fc0e8" /><circle cx="13" cy="14" r="3" fill="#d6e6f8" /></Ic>
            <Tri color="#8a8a8a" />
          </span>
          <b>COPY</b>
          <span className="pl-[6px]">指定第二个点或 [</span>
          <span className="bg-[#d4d4d4] rounded-sm leading-[26px]">阵列(<span className="text-[#0000ff] font-bold">A</span>)</span>
          <span>] &lt;使用第一个点作为位移&gt;:</span>
          <input aria-label="命令" className="flex-1 min-w-0 bg-transparent outline-none" />
          <span className="pr-[8px]"><Tri up color="#222" /></span>
        </label>
      </div>
    </div>
  );
}

function Watermark() {
  return (
    <svg viewBox="0 0 480 250" className="absolute right-[100px] -bottom-[29px] w-[480px] h-[250px] pointer-events-none" fill="#c3c5c7">
      <g opacity="0.960">
        <text x="-7" y="151" className="text-[103px] font-bold font-['Liberation_Sans',sans-serif]" stroke="#c3c5c7" strokeWidth="3">Bai</text>
        <ellipse cx="171" cy="64" rx="17" ry="22" />
        <ellipse cx="203" cy="32" rx="16" ry="22" />
        <ellipse cx="244" cy="35" rx="17" ry="22" transform="rotate(8 244 35)" />
        <rect x="252" y="53" width="34" height="43" rx="17" />
        <path d="M221 68Q233 68 241 82Q247 93 263 105Q279 118 278 130Q276 152 254 153Q245 153 238 151Q221 147 204 151Q196 153 188 152Q166 149 164 130Q163 117 179 105Q193 94 201 82Q209 68 221 68z" />
        <text x="180" y="140" fill="#222831" className="text-[64px] font-bold font-['Liberation_Sans',sans-serif]">du</text>
        <text x="293" y="144" className="text-[76px] font-black font-['Noto_Sans_CJK_SC',sans-serif]" stroke="#c3c5c7" strokeWidth="2">经验</text>
      </g>
      <text x="5" y="211" fill="#dcdcdd" stroke="#c4c6c8" strokeWidth="1" className="text-[53px] font-['Open_Sans',sans-serif]">jingyan.baidu.com</text>
    </svg>
  );
}

function Canvas() {
  return (
    <main className="flex flex-1 min-h-[700px]">
      <div className="relative z-10 flex-1 bg-[#212830] border-b border-[#4a4d51]">
        <div className="absolute inset-0 overflow-hidden"><Drawing /></div>
        <p className="absolute left-[2px] top-[4px] text-[12px] leading-[18px] text-[#e2e2e2] whitespace-nowrap">[−] [自定义视图] [X 射线]</p>
        <div className="absolute right-[12px] top-[9px] flex items-center gap-[9px]">
          <button aria-label="最小化视口"><Ic w={10} vb="0 0 10 10"><path d="M0 8h10" stroke="#fff" strokeWidth="3" /></Ic></button>
          <button aria-label="还原视口"><Ic w={11} vb="0 0 10 10"><path d="M1 3.500h6V9H1zM3 1h6v6" stroke="#fff" strokeWidth="1.600" /></Ic></button>
          <button aria-label="关闭视口"><Ic w={10} vb="0 0 10 10"><path d="M1 1l8 8M9 1L1 9" stroke="#fff" strokeWidth="2.200" /></Ic></button>
        </div>
        <p className="absolute left-[1610px] top-[174px] text-[33px] leading-[44px] text-white whitespace-pre font-['Noto_Sans_CJK_SC',sans-serif]">
          {"切到三维建模，调整视角，用“复制选择”\n在上面复制出另一个齿轮面"}
        </p>
        <div role="tooltip" className="absolute left-[1854px] top-[655px] w-[154px] h-[25px] pl-[3px] border border-black bg-[#999999] text-[15px] leading-[22px] text-black whitespace-nowrap">
          极轴: 40.0000 &lt; +Z
        </div>
        <ViewCube />
        <NavBar />
        <CommandLine />
        <Watermark />
      </div>
      <div className="w-[11px] shrink-0 flex flex-col bg-[#b4cce8] border-r-[3px] border-[#05080c]">
        <div className="h-[90px] bg-linear-to-b from-[#b4cce8] to-[#dde8f6]" />
        <div className="flex-1" />
      </div>
    </main>
  );
}

/* ---------- bottom bars ---------- */

function LayoutTabs() {
  const tab = "h-[23px] w-[64px] rounded-b-lg border border-t-0 border-[#5e5e5e] leading-[21px] ";
  return (
    <div className="flex items-start pl-[10px] h-[25px] gap-[3px] text-[15px] text-[#b8b8b8]">
      <button className={tab + "bg-linear-to-b from-[#5c5c5c] to-[#8a8a8a] text-white font-bold"}>模型</button>
      <button className={tab + "bg-[#4d4d4d]"}>布局1</button>
      <button className={tab + "bg-[#4d4d4d]"}>布局2</button>
      <button aria-label="新建布局" className="h-[21px] w-[26px] ml-[6px] flex items-center justify-center rounded-tl-lg rounded-br-lg border border-[#5e5e5e] bg-[#484848]">
        <svg viewBox="0 0 10 10" className="w-[11px] h-[10px]"><path d="M5 0v10M0 5h10" stroke="#c2c2c2" strokeWidth="2.500" /></svg>
      </button>
    </div>
  );
}

function Cell({ label, w = "w-[30px]", children }) {
  return <button aria-label={label} className={"h-full flex items-center justify-center " + w}>{children}</button>;
}

function Group({ children }) {
  return <div className="h-[32px] flex items-center border border-[#7a7a7a] bg-[#525252]">{children}</div>;
}

const drop = "w-[18px]";

function StatusBar() {
  const blue = "#1e86f0";
  const grey = "#bdbdbd";
  return (
    <footer className="flex justify-end items-center h-[34px] gap-[1px] text-[15px] text-white overflow-hidden">
      <Group><button className="w-[35px]">模型</button></Group>
      <Group>
        <Cell label="栅格"><Ic w={22}><path d="M3 5h18M3 10h18M3 15h18M3 20h18M5 3v19M10 3v19M15 3v19M20 3v19" stroke={blue} strokeWidth="2" /></Ic></Cell>
        <Cell label="捕捉"><Ic w={22}><path d="M3 4h19M3 9h19M3 14h19M3 19h19" stroke={blue} strokeWidth="2" strokeDasharray="2 2" /></Ic></Cell>
        <Cell label="捕捉选项" w={drop}><Tri size="lg" /></Cell>
      </Group>
      <Group>
        <Cell label="正交"><Ic w={20}><path d="M3 2v19h19M3 14h7v7" stroke={grey} strokeWidth="2" /></Ic></Cell>
        <Cell label="极轴"><Ic w={22}><circle cx="11" cy="13" r="8.500" stroke={blue} strokeWidth="2.200" /><path d="M11 13h11M11 13l7-11M18 9v8" stroke={blue} strokeWidth="2" /></Ic></Cell>
        <Cell label="极轴选项" w={drop}><Tri size="lg" /></Cell>
        <Cell label="等轴测"><Ic w={24}><path d="M2 2l20 21M13 1v22" stroke={grey} strokeWidth="1.800" /></Ic></Cell>
        <Cell label="等轴测选项" w={drop}><Tri size="lg" /></Cell>
        <span className="w-px h-full bg-[#7a7a7a]" />
        <Cell label="对象追踪"><Ic w={22}><path d="M22 2L2 21h20" stroke={blue} strokeWidth="2.200" /><path d="M8 11h5v5H8z" fill={blue} /></Ic></Cell>
        <Cell label="对象捕捉"><Ic w={22}><path d="M5 5h15v16H5z" stroke={blue} strokeWidth="2.200" /><path d="M1 1h8v8H1z" fill="#16e01e" stroke="#083d08" strokeWidth="2" /></Ic></Cell>
        <Cell label="对象捕捉选项" w={drop}><Tri size="lg" /></Cell>
      </Group>
      <Group>
        <Cell label="注释可见性"><Ic w={24}><path d="M10 2l3 13 8 7h-5l-5-4-4 4H1l7-7z" fill={blue} /><circle cx="17" cy="7" r="4" stroke={blue} strokeWidth="2.200" /></Ic></Cell>
        <Cell label="自动缩放"><Ic w={24}><path d="M10 2l3 13 8 7h-5l-5-4-4 4H1l7-7z" fill={grey} /><path d="M18 2l-4 6h5l-3 6" stroke={grey} strokeWidth="2" /></Ic></Cell>
        <Cell label="注释比例图标"><Ic w={24}><path d="M12 1l3 14 7 7h-5l-5-4-5 4H2l7-7z" fill={grey} /></Ic></Cell>
        <button className="flex items-center justify-center gap-[4px] w-[42px]">1:1<Tri size="lg" /></button>
      </Group>
      <Group>
        <Cell label="工作空间"><Ic w={20}><path d="M12 2v20M2 12h20M5 5l14 14M19 5L5 19" stroke={grey} strokeWidth="4" /><circle cx="12" cy="12" r="7.500" fill={grey} /><circle cx="12" cy="12" r="3" fill="#525252" /></Ic></Cell>
        <Cell label="工作空间选项" w={drop}><Tri size="lg" /></Cell>
        <span className="w-px h-full bg-[#7a7a7a]" />
        <Cell label="注释监视器"><Ic w={20}><path d="M12 1v22M1 12h22" stroke={grey} strokeWidth="2.800" /></Ic></Cell>
      </Group>
      <Group>
        <Cell label="隔离对象"><Ic w={22}><path d="M3 2h8v11H3zM12 22l-3-7-4 7z" stroke={grey} strokeWidth="2" /><circle cx="18" cy="11" r="4" stroke={grey} strokeWidth="2" /></Ic></Cell>
      </Group>
      <Group>
        <Cell label="硬件加速"><Ic w={23}><circle cx="12" cy="12" r="10.500" fill="#0a4fa0" stroke={blue} strokeWidth="2" /><path d="M12 16l4-4" stroke="#62b0ff" strokeWidth="2" /></Ic></Cell>
      </Group>
      <Group><span className="w-[3px]" /></Group>
      <Group>
        <Cell label="全屏显示"><Ic w={21}><path d="M2 3h20v18H2z" stroke={grey} strokeWidth="2.200" /><path d="M13 6h6v6zM5 12v6h6z" fill={grey} /><path d="M17 8l-3 3M7 16l3-3" stroke={grey} strokeWidth="2" /></Ic></Cell>
        <Cell label="自定义"><Ic w={22}><path d="M2 5h20M2 12h20M2 19h20" stroke={grey} strokeWidth="3" /></Ic></Cell>
      </Group>
    </footer>
  );
}

export default function App() {
  return (
    <div className="flex flex-col min-h-screen overflow-hidden bg-[#373737] font-['Noto_Sans','Noto_Sans_CJK_SC',sans-serif]">
      <TitleBar />
      <RibbonTabs />
      <Ribbon />
      <DocTabs />
      <Canvas />
      <div className="h-[60px] shrink-0 border-b border-[#24300a]">
        <LayoutTabs />
        <StatusBar />
      </div>
    </div>
  );
}
